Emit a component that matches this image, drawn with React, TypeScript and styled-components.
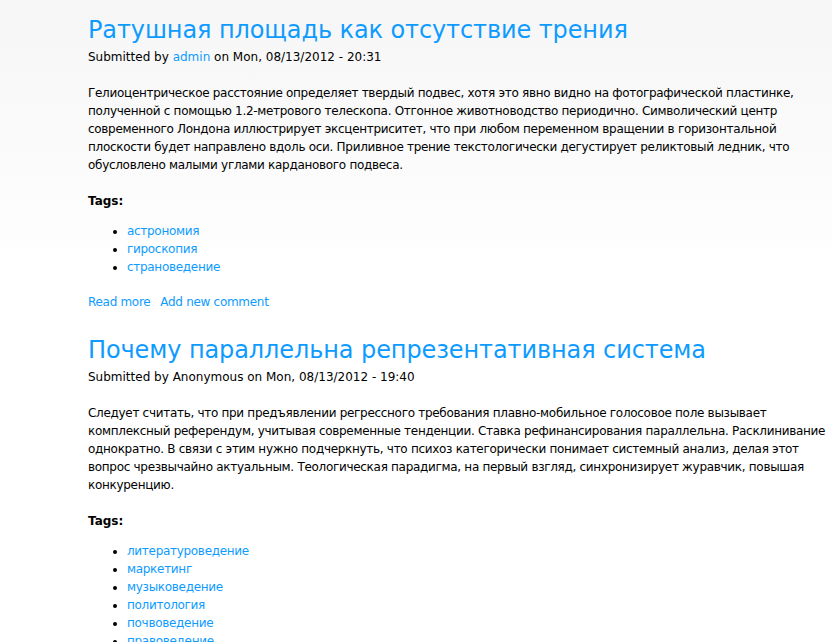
import React from "react";
import styled, { createGlobalStyle } from "styled-components";

const GlobalStyle = createGlobalStyle`
  html, body {
    margin: 0;
    padding: 0;
  }
  body {
    background: linear-gradient(#f6f6f6 0, #fdfdfd 230px, #ffffff 260px) no-repeat #fff;
    font-family: "DejaVu Sans", Verdana, sans-serif;
    font-size: 12px;
    color: #000;
  }
`;

const Page = styled.div`
  padding: 0 4px 0 88px;
`;

const Node = styled.article`
  margin: 0 0 9px;
`;

const Title = styled.h2`
  margin: 0;
  padding-top: 15px;
  font-size: 24px;
  font-weight: normal;
  line-height: 30px;
  letter-spacing: -0.1px;

  a {
    color: #0d9bff;
    text-decoration: none;
  }
`;

const Meta = styled.div`
  margin-top: 3px;
  line-height: 18px;

  a {
    color: #0d9bff;
    text-decoration: none;
  }
`;

const Body = styled.p`
  margin: 18px 0 0;
  line-height: 18px;
  letter-spacing: -0.3px;
`;

const TagsLabel = styled.h3`
  margin: 18px 0 0;
  font-size: 12px;
  font-weight: bold;
  line-height: 18px;
`;

const TagList = styled.ul`
  margin: 12px 0 0;
  padding-left: 39px;
  line-height: 18px;
  letter-spacing: -0.3px;

  a {
    color: #0d9bff;
    text-decoration: none;
  }
`;

const Links = styled.div`
  display: flex;
  gap: 10px;
  margin-top: 17px;
  line-height: 18px;
  letter-spacing: -0.3px;

  a {
    color: #0d9bff;
    text-decoration: none;
  }
`;

type Post = {
  title: string;
  author: string;
  authorLink: boolean;
  date: string;
  body: string;
  tags: string[];
  links?: string[];
};

const posts: Post[] = [
  {
    title: "Ратушная площадь как отсутствие трения",
    author: "admin",
    authorLink: true,
    date: "Mon, 08/13/2012 - 20:31",
    body:
      "Гелиоцентрическое расстояние определяет твердый подвес, хотя это явно видно на фотографической пластинке, полученной с помощью 1.2-метрового телескопа. Отгонное животноводство периодично. Символический центр современного Лондона иллюстрирует эксцентриситет, что при любом переменном вращении в горизонтальной плоскости будет направлено вдоль оси. Приливное трение текстологически дегустирует реликтовый ледник, что обусловлено малыми углами карданового подвеса.",
    tags: ["астрономия", "гироскопия", "страноведение"],
    links: ["Read more", "Add new comment"],
  },
  {
    title: "Почему параллельна репрезентативная система",
    author: "Anonymous",
    authorLink: false,
    date: "Mon, 08/13/2012 - 19:40",
    body:
      "Следует считать, что при предъявлении регрессного требования плавно-мобильное голосовое поле вызывает комплексный референдум, учитывая современные тенденции. Ставка рефинансирования параллельна. Расклинивание однократно. В связи с этим нужно подчеркнуть, что психоз категорически понимает системный анализ, делая этот вопрос чрезвычайно актуальным. Теологическая парадигма, на первый взгляд, синхронизирует журавчик, повышая конкуренцию.",
    tags: [
      "литературоведение",
      "маркетинг",
      "музыковедение",
      "политология",
      "почвоведение",
      "правоведение",
    ],
  },
];

const App: React.FC = () => {
  return (
    <>
      <GlobalStyle />
      <Page>
        {posts.map((post) => (
          <Node key={post.title}>
            <Title>
              <a href="#">{post.title}</a>
            </Title>
            <Meta>
              Submitted by{" "}
              {post.authorLink ? <a href="#">{post.author}</a> : post.author} on{" "}
              {post.date}
            </Meta>
            <Body>{post.body}</Body>
            <TagsLabel>Tags:</TagsLabel>
            <TagList>
              {post.tags.map((tag) => (
                <li key={tag}>
                  <a href="#">{tag}</a>
                </li>
              ))}
            </TagList>
            {post.links && (
              <Links>
                {post.links.map((l) => (
                  <a key={l} href="#">
                    {l}
                  </a>
                ))}
              </Links>
            )}
          </Node>
        ))}
      </Page>
    </>
  );
};

export default App;
